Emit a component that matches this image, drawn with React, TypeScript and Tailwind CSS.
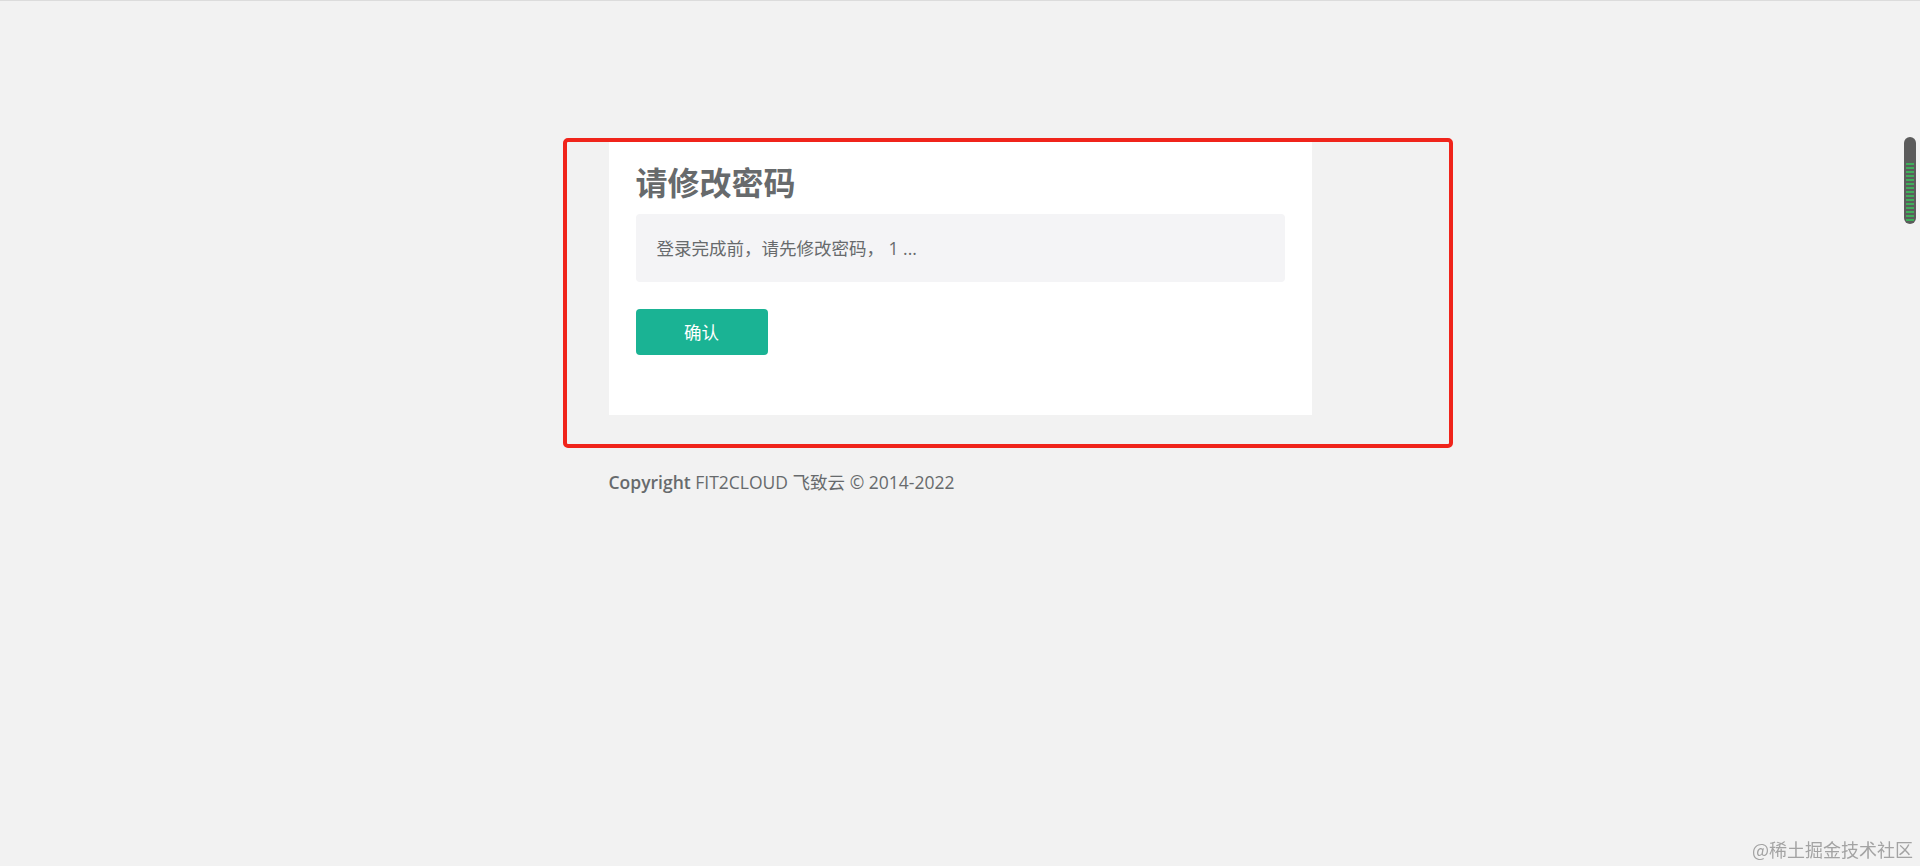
import React from 'react';

const font = { fontFamily: '"Open Sans", "Noto Sans CJK SC", sans-serif' };

const ScrollThumb: React.FC = () => (
    <div className="fixed right-[4px] top-[137px] w-[12px] h-[87px] rounded-full bg-[#5c5c5c] flex flex-col justify-end px-[2px] pb-[3px]">
        <div className="h-[58px] w-full flex flex-col justify-between">
            {Array.from({ length: 15 }).map((_, i) => (
                <div key={i} className="h-[2px] w-full bg-[#3fae5a]"></div>
            ))}
        </div>
    </div>
);

const App: React.FC = () => {
    return (
        <div className="min-h-screen bg-[#f2f2f2] border-t border-[#dcdcdc]" style={font}>
            <div className="w-[703px] mx-auto pt-[141px]">
                <div className="relative">
                    {/* red annotation frame */}
                    <div className="absolute left-[-46px] top-[-4px] w-[890px] h-[310px] border-[4px] border-[#f0241b] rounded-[5px] pointer-events-none"></div>

                    <div className="bg-white h-[273px] px-[27px] pt-[18px] flex flex-col items-start">
                        <h2 className="text-[32px] leading-[46px] font-bold text-[#676a6c]">请修改密码</h2>
                        <div className="mt-[8px] w-full h-[68px] rounded-[4px] bg-[#f4f4f6] flex items-center px-[21px] text-[17.5px] text-[#676a6c]">
                            登录完成前，请先修改密码， 1 ...
                        </div>
                        <button className="mt-[27px] w-[132px] h-[46px] rounded-[4px] bg-[#1ab394] text-white text-[17.5px]">
                            确认
                        </button>
                    </div>
                </div>

                <div className="mt-[54px] text-[17.5px] text-[#676a6c]">
                    <span className="font-semibold">Copyright</span> FIT2CLOUD 飞致云 © 2014-2022
                </div>
            </div>

            <ScrollThumb />

            <div className="fixed right-[7px] bottom-[3px] text-[18px] text-[#a3a3a3]" style={{ fontFamily: '"Noto Sans CJK SC", sans-serif' }}>
                @稀土掘金技术社区
            </div>
        </div>
    );
};

export default App;
